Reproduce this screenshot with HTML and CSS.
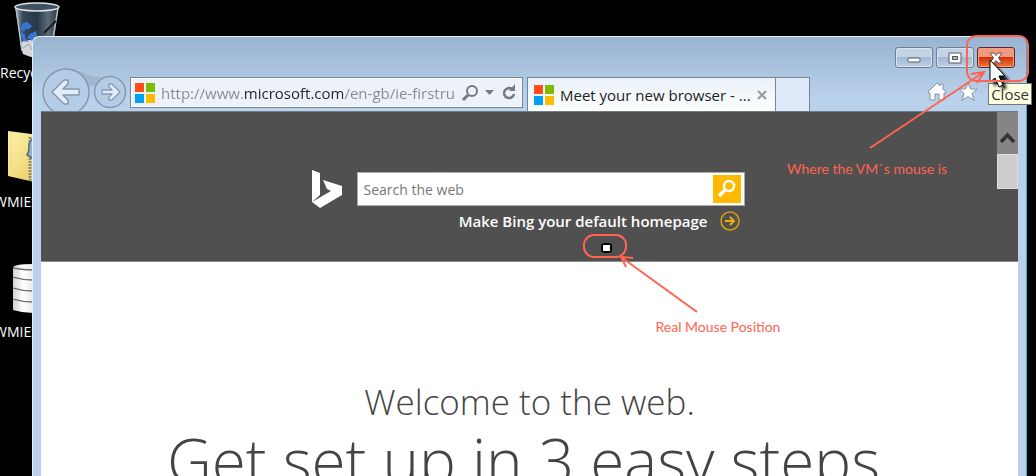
FILE: index.html
```html
<!DOCTYPE html>
<html lang="en">
<head>
    <meta charset="UTF-8">
    <meta name="viewport" content="width=device-width, initial-scale=1.0">
    <title>Meet your new browser</title>
    <link rel="stylesheet" href="styles.css">
</head>
<body>
    <div class="desktop">
        <!-- Desktop shortcuts -->
        <div class="shortcut recycle">
            <svg width="48" height="58" viewBox="0 0 48 58">
                <defs>
                    <linearGradient id="bin" x1="0" x2="1" y1="0" y2="0">
                        <stop offset="0" stop-color="#a5afb8"/>
                        <stop offset="0.18" stop-color="#37485a"/>
                        <stop offset="0.5" stop-color="#263747"/>
                        <stop offset="0.75" stop-color="#5c6b7a"/>
                        <stop offset="1" stop-color="#28323c"/>
                    </linearGradient>
                </defs>
                <path d="M2 5L9 51Q12 56 24 56Q37 56 39 51L46 5Z" fill="url(#bin)"/>
                <path d="M7 42Q14 37 22 40L38 44L37 53Q24 60 10 53Z" fill="#d5d7d9"/>
                <path d="M10 47l6-4 3 6 7-5 8 4" fill="none" stroke="#9da1a5"/>
                <path d="M3 7L9 50M45 7L38 50" stroke="#b7c0c8" stroke-width="1.5"/>
                <path d="M43 20L31 32" stroke="#151d26" stroke-width="2"/>
                <ellipse cx="24" cy="6" rx="22" ry="4" fill="#3f5163" stroke="#dfe3e6" stroke-width="1.5"/>
                <path d="M8 28Q8 21 14 21L19 25L15 29L13 27L11 31ZM7 31L12 33V37L16 41L10 40ZM17 33L23 30L24 34L20 40L14 37Z" fill="#3676d6"/>
            </svg>
            <span>Recycle Bin</span>
        </div>
        <div class="shortcut zip">
            <svg width="40" height="54" viewBox="0 0 40 54">
                <defs>
                    <linearGradient id="folder" x1="0" x2="1" y1="0" y2="1">
                        <stop offset="0" stop-color="#fdf1a9"/>
                        <stop offset="1" stop-color="#e8c95b"/>
                    </linearGradient>
                </defs>
                <path d="M1 1L40 6V55L1 46Z" fill="url(#folder)"/>
                <path d="M4 2V46" stroke="#f3d98b"/>
                <path d="M23 7V52" stroke="#8c8c80" stroke-width="3" stroke-dasharray="2 1"/>
                <path d="M25 9Q21 12 22 20L20 25L25 28" fill="#9bb0c2" stroke="#52687c" stroke-width="1.5"/>
            </svg>
            <span>WMIExplorer</span>
        </div>
        <div class="shortcut database">
            <svg width="40" height="50" viewBox="0 0 40 50">
                <defs>
                    <linearGradient id="disk" x1="0" x2="1" y1="0" y2="0">
                        <stop offset="0" stop-color="#d2d2d2"/>
                        <stop offset="0.25" stop-color="#ffffff"/>
                        <stop offset="1" stop-color="#bdbdbd"/>
                    </linearGradient>
                </defs>
                <path d="M0 4Q0 0 20 0Q40 0 40 4V46Q20 52 0 46Z" fill="url(#disk)"/>
                <path d="M0 4Q20 8 40 4M0 13Q20 19 40 13M0 24Q20 30 40 24M0 35Q20 41 40 35" fill="none" stroke="#6f6f6f" stroke-width="1.3"/>
            </svg>
            <span>WMIExplorer</span>
        </div>

        <!-- Browser window -->
        <div class="window">
            <div class="titlebar">
                <button class="caption" aria-label="Minimize">
                    <svg width="14" height="12" viewBox="0 0 14 12"><rect x="1" y="6" width="12" height="4" rx="1" fill="#fff" stroke="#535d69"/></svg>
                </button>
                <button class="caption" aria-label="Maximize">
                    <svg width="14" height="12" viewBox="0 0 14 12"><path d="M1 1H13V11H1Z" fill="#fff" stroke="#535d69"/><rect x="4.500" y="4.500" width="5" height="3" fill="#9fb4cc" stroke="#535d69"/></svg>
                </button>
                <button class="caption close" aria-label="Close">
                    <svg width="14" height="12" viewBox="0 0 14 12"><path d="M1 1H5L7 3.500L9 1H13L9.500 6L13 11H9L7 8.500L5 11H1L4.500 6Z" fill="#fff" stroke="#6d5558"/></svg>
                </button>
            </div>

            <div class="toolbar">
                <div class="travel">
                    <svg class="bridge" width="84" height="48" viewBox="0 0 84 48"><path d="M25 1Q40 3 49 7Q58 10 67 9L54 17L46 20Q43 6 25 1Z" fill="#a2b7cf"/></svg>
                    <button class="back" aria-label="Back">
                        <svg width="48" height="48" viewBox="0 0 48 48"><circle cx="24" cy="24" r="23" fill="#b5cce6" stroke="#8499b1" stroke-width="1.500"/><path d="M10 24L22 12L26 12V16L21 21H37V27H21L26 32V36H22Z" fill="#e2ecf8" stroke="#8598ae" stroke-width="1.500" stroke-linejoin="round"/></svg>
                    </button>
                    <button class="forward" aria-label="Forward">
                        <svg width="34" height="34" viewBox="0 0 34 34"><circle cx="17" cy="17" r="15.500" fill="#b5cce6" stroke="#8499b1" stroke-width="1.500"/><path d="M27 17L19 9H16V12L19 15H9V19H19L16 22V25H19Z" fill="#e2ecf8" stroke="#8598ae" stroke-width="1.300" stroke-linejoin="round"/></svg>
                    </button>
                </div>
                <div class="address">
                    <svg width="20" height="20" viewBox="0 0 20 20"><path d="M0 0H9V9H0Z" fill="#ff4e1c"/><path d="M11 0H20V9H11Z" fill="#7cbb00"/><path d="M0 11H9V20H0Z" fill="#00a1f1"/><path d="M11 11H20V20H11Z" fill="#ffbb00"/></svg>
                    <input type="text" class="url" aria-label="Address" value="http://www.microsoft.com/en-gb/ie-firstrun">
                    <button class="tool" aria-label="Search">
                        <svg width="18" height="18" viewBox="0 0 18 18"><circle cx="11" cy="7" r="5" fill="none" stroke="#737980" stroke-width="2"/><path d="M7 11L2 16" stroke="#737980" stroke-width="3"/></svg>
                    </button>
                    <button class="tool" aria-label="Show address list">
                        <svg width="10" height="6" viewBox="0 0 10 6"><path d="M0 0H9L4.500 5Z" fill="#737980"/></svg>
                    </button>
                    <button class="tool refresh" aria-label="Refresh">
                        <svg width="16" height="18" viewBox="0 0 16 18"><path d="M11 5A5 5 0 1 0 13 10" fill="none" stroke="#737980" stroke-width="2.500"/><path d="M8 7H14V0Z" fill="#737980"/></svg>
                    </button>
                </div>
                <div class="tab">
                    <svg width="20" height="20" viewBox="0 0 20 20"><path d="M0 0H9V9H0Z" fill="#ff4e1c"/><path d="M11 0H20V9H11Z" fill="#7cbb00"/><path d="M0 11H9V20H0Z" fill="#00a1f1"/><path d="M11 11H20V20H11Z" fill="#ffbb00"/></svg>
                    <span class="tab-title">Meet your new browser - ...</span>
                    <button class="tool" aria-label="Close tab">
                        <svg width="12" height="12" viewBox="0 0 12 12"><path d="M2 2L10 10M10 2L2 10" stroke="#9b9b9b" stroke-width="2.200"/></svg>
                    </button>
                </div>
                <button class="new-tab" aria-label="New tab"></button>
                <div class="commands">
                    <button class="tool" aria-label="Home">
                        <svg width="20" height="20" viewBox="0 0 20 20"><path d="M1 10L10 1L13 4V2H16V7L19 10V11H17V18H12V12H8V18H3V11H1Z" fill="#fff" stroke="#8393a6" stroke-linejoin="round"/></svg>
                    </button>
                    <button class="tool" aria-label="Favorites">
                        <svg width="20" height="20" viewBox="0 0 20 20"><path d="M10 1L12.500 7H19L14 11.500L16 18.500L10 14.500L4 18.500L6 11.500L1 7H7.500Z" fill="#fff" stroke="#8393a6" stroke-linejoin="round"/></svg>
                    </button>
                    <button class="tool" aria-label="Tools">
                        <svg width="20" height="20" viewBox="0 0 20 20"><circle cx="10" cy="10" r="6" fill="none" stroke="#fff" stroke-width="4"/><circle cx="10" cy="10" r="9" fill="none" stroke="#8393a6" stroke-dasharray="4 3"/></svg>
                    </button>
                </div>
            </div>

            <div class="page">
                <div class="hero">
                    <form class="search">
                        <svg width="32" height="40" viewBox="0 0 32 40"><path d="M1 1L9 4V26L1 33ZM12 11L31 17V26L9 39L1 33L20 22L16 20Z" fill="#fff"/></svg>
                        <div class="search-box">
                            <input type="text" class="query" aria-label="Search the web" placeholder="Search the web">
                            <button type="button" class="go" aria-label="Search">
                                <svg width="20" height="20" viewBox="0 0 20 20"><circle cx="12" cy="7" r="5" fill="none" stroke="#fff" stroke-width="2.400"/><path d="M8 11L2 17" stroke="#fff" stroke-width="3.500"/></svg>
                            </button>
                        </div>
                    </form>
                    <a class="homepage" href="#">
                        <span>Make Bing your default homepage</span>
                        <svg width="20" height="20" viewBox="0 0 20 20"><circle cx="10" cy="10" r="9" fill="none" stroke="#d99f0c" stroke-width="1.500"/><path d="M5 10H14M10 6L14 10L10 14" fill="none" stroke="#f0ae08" stroke-width="2"/></svg>
                    </a>
                </div>
                <div class="welcome">
                    <h2>Welcome to the web.</h2>
                    <h1>Get set up in 3 easy steps</h1>
                </div>
                <div class="scrollbar">
                    <svg width="21" height="42" viewBox="0 0 21 42"><path d="M4 30L10.500 23L17 30" fill="none" stroke="#333" stroke-width="3.500"/></svg>
                    <div class="thumb"></div>
                </div>

                <!-- Note on the real pointer -->
                <div class="note real">
                    <svg width="210" height="83" viewBox="0 0 210 83">
                        <rect x="1" y="1" width="42" height="22" rx="10" fill="none" stroke="#ff6450" stroke-width="2"/>
                        <rect x="18" y="9" width="11" height="10" rx="3" fill="#000"/>
                        <rect x="20" y="11" width="7" height="6" fill="#fff"/>
                        <path d="M114 78L38 23M50 24L38 23L43 33" fill="none" stroke="#ff6450" stroke-width="2"/>
                    </svg>
                    <span>Real Mouse Position</span>
                </div>
            </div>
        </div>

        <!-- Note on the guest pointer -->
        <div class="tooltip" role="tooltip">Close</div>
        <div class="note guest">
            <svg width="250" height="124" viewBox="0 0 250 124">
                <defs>
                    <filter id="soft"><feGaussianBlur stdDeviation="1.500"/></filter>
                </defs>
                <path d="M208 29V52L213 47L217 55L221 53L217 46H224Z" fill="#000" opacity="0.900" filter="url(#soft)"/>
                <path d="M204 25V47L209 43L213 52L217 50L213 41H219Z" fill="#fff" stroke="#000"/>
                <rect x="181" y="1" width="61" height="45" rx="9" fill="none" stroke="#ff6450" stroke-width="2"/>
                <path d="M84 113L198 37M185 39L198 37L191 48" fill="none" stroke="#ff6450" stroke-width="2"/>
            </svg>
            <span>Where the VM`s mouse is</span>
        </div>
    </div>
</body>
</html>
```
FILE: styles.css
```css
* {
    box-sizing: border-box;
}
body {
    margin: 0;
    background-color: #000;
    font-family: "Open Sans", "Noto Sans", sans-serif;
}
button {
    padding: 0;
    border: none;
    background: none;
    cursor: pointer;
}
svg {
    display: block;
    flex-shrink: 0;
}
input {
    min-width: 0;
    padding: 0;
    border: none;
    outline: none;
    font-family: inherit;
}
.desktop {
    position: relative;
    height: 100vh;
    overflow: hidden;
    background-color: #000;
}

/* desktop icons */
.shortcut {
    position: absolute;
    color: #fff;
    font-size: 14px;
    line-height: 20px;
    white-space: nowrap;
}
.shortcut svg {
    margin-left: 13px;
}
.shortcut span {
    display: block;
    margin-top: 8px;
}
.recycle {
    left: 0;
    top: 1px;
}
.recycle span {
    margin-top: 4px;
}
.zip {
    left: -6px;
    top: 130px;
}
.database {
    left: -6px;
    top: 264px;
}
.database svg {
    margin-left: 19px;
}

/* window frame */
.window {
    position: absolute;
    left: 32px;
    right: 9px;
    top: 36px;
    bottom: 0;
    display: flex;
    flex-direction: column;
    padding: 0 8px;
    border: 1px solid #e4eef8;
    border-right-color: #36b5cf;
    border-bottom: none;
    border-radius: 7px 7px 0 0;
    background: linear-gradient(#99b4d1, #b9d1ea 60px, #b9d1ea);
}
.titlebar {
    display: flex;
    justify-content: flex-end;
    gap: 3px;
    height: 40px;
    padding: 10px 3px 0 0;
}
.caption {
    display: flex;
    align-items: center;
    justify-content: center;
    width: 38px;
    height: 21px;
    border: 1px solid #6d7f93;
    border-radius: 3px;
    background: linear-gradient(#c3d3e5 45%, #a3b9d1 50%, #bdd0e6);
    box-shadow: inset 0 0 0 1px #d7e4f2;
}
.caption.close {
    border-color: #64222a;
    background: linear-gradient(#ef9a7e 45%, #d2320a 50%, #ee7a35);
    box-shadow: inset 0 0 0 1px #f3a183;
}
.toolbar {
    display: flex;
    height: 34px;
}
.travel {
    position: relative;
    display: flex;
    align-items: flex-start;
    width: 89px;
    height: 34px;
}
.bridge {
    position: absolute;
    left: 0;
    top: -9px;
}
.back {
    position: relative;
    margin: -9px 0 0 1px;
}
.forward {
    position: relative;
    margin-left: 3px;
    margin-top: -2px;
}
.address {
    display: flex;
    flex: 1;
    align-items: center;
    gap: 6px;
    min-width: 0;
    height: 31px;
    padding: 0 5px 0 4px;
    border: 1px solid #75859a;
    background-color: #edf2fa;
    box-shadow: inset 0 0 0 1px #fff;
}
.url {
    flex: 1;
    height: 26px;
    font-size: 15px;
    color: transparent;
    /* the host name is darker than the rest of the address */
    background: linear-gradient(90deg, #858a91 82px, #20242a 82px, #20242a 182px, #858a91 182px);
    -webkit-background-clip: text;
    background-clip: text;
}
.tool {
    display: flex;
    align-items: center;
    justify-content: center;
}
.tab {
    display: flex;
    align-items: center;
    gap: 6px;
    width: 249px;
    margin-left: 4px;
    padding: 0 7px 0 6px;
    border: 1px solid #75859a;
    border-bottom: none;
    background: linear-gradient(#e9f0f8, #fff);
}
.tab-title {
    flex: 1;
    overflow: hidden;
    font-size: 15px;
    line-height: 20px;
    color: #222;
    white-space: nowrap;
}
.new-tab {
    width: 34px;
    border: 1px solid #75859a;
    border-left: none;
    border-bottom: none;
    background-color: #dfeaf8;
}
.commands {
    display: flex;
    justify-content: flex-end;
    align-items: center;
    gap: 11px;
    width: 208px;
    padding: 0 9px 4px 0;
}

/* web page */
.page {
    position: relative;
    flex: 1;
    min-height: 0;
    border-top: 1px solid #6e7d8c;
    background-color: #fff;
}
.hero {
    display: flex;
    flex-direction: column;
    align-items: center;
    height: 150px;
    padding: 57px 4px 0 0;
    border-bottom: 1px solid #8a8a8a;
    background-color: #505050;
}
.search {
    display: flex;
    align-items: center;
    gap: 14px;
    width: 434px;
}
.search-box {
    display: flex;
    flex: 1;
    align-items: center;
    height: 34px;
    padding: 3px;
    border: 1px solid #aaa;
    background-color: #fff;
}
.query {
    flex: 1;
    padding-left: 3px;
    font-size: 14px;
}
.query::placeholder {
    color: #777;
}
.go {
    display: flex;
    align-items: center;
    justify-content: center;
    width: 28px;
    height: 28px;
    background-color: #ffb900;
}
.homepage {
    display: flex;
    align-items: center;
    justify-content: flex-end;
    gap: 12px;
    width: 434px;
    padding-right: 5px;
    color: #fff;
    font-size: 15px;
    font-weight: 600;
    line-height: 24px;
    text-decoration: none;
    white-space: nowrap;
}
.welcome {
    padding-top: 112px;
    color: #444;
    text-align: center;
    white-space: nowrap;
}
.welcome h2 {
    margin: 0;
    font-size: 35px;
    font-weight: 300;
    line-height: 56px;
}
.welcome h1 {
    margin: 0;
    padding-right: 12px;
    font-size: 62px;
    font-weight: 300;
    line-height: 60px;
}
.scrollbar {
    position: absolute;
    right: 0;
    top: 0;
    width: 21px;
    background-color: #858585;
}
.thumb {
    height: 35px;
    border: 1px solid #ddd;
    background-color: #cdcdcd;
}

/* notes */
.note {
    position: absolute;
    color: #ff6450;
    font-family: Lato, sans-serif;
    font-size: 14px;
    line-height: 20px;
    white-space: nowrap;
}
.real {
    left: 50%;
    top: 122px;
    width: 210px;
    margin-left: 53px;
}
.real span {
    display: block;
    padding-left: 73px;
}
.guest {
    right: 0;
    top: 35px;
    width: 250px;
}
.guest span {
    display: block;
    padding-left: 1px;
}
.tooltip {
    position: absolute;
    right: 4px;
    top: 83px;
    padding: 0 2px;
    border: 1px solid #767676;
    background-color: #ffffe1;
    color: #333;
    font-size: 15px;
    line-height: 20px;
}
```
